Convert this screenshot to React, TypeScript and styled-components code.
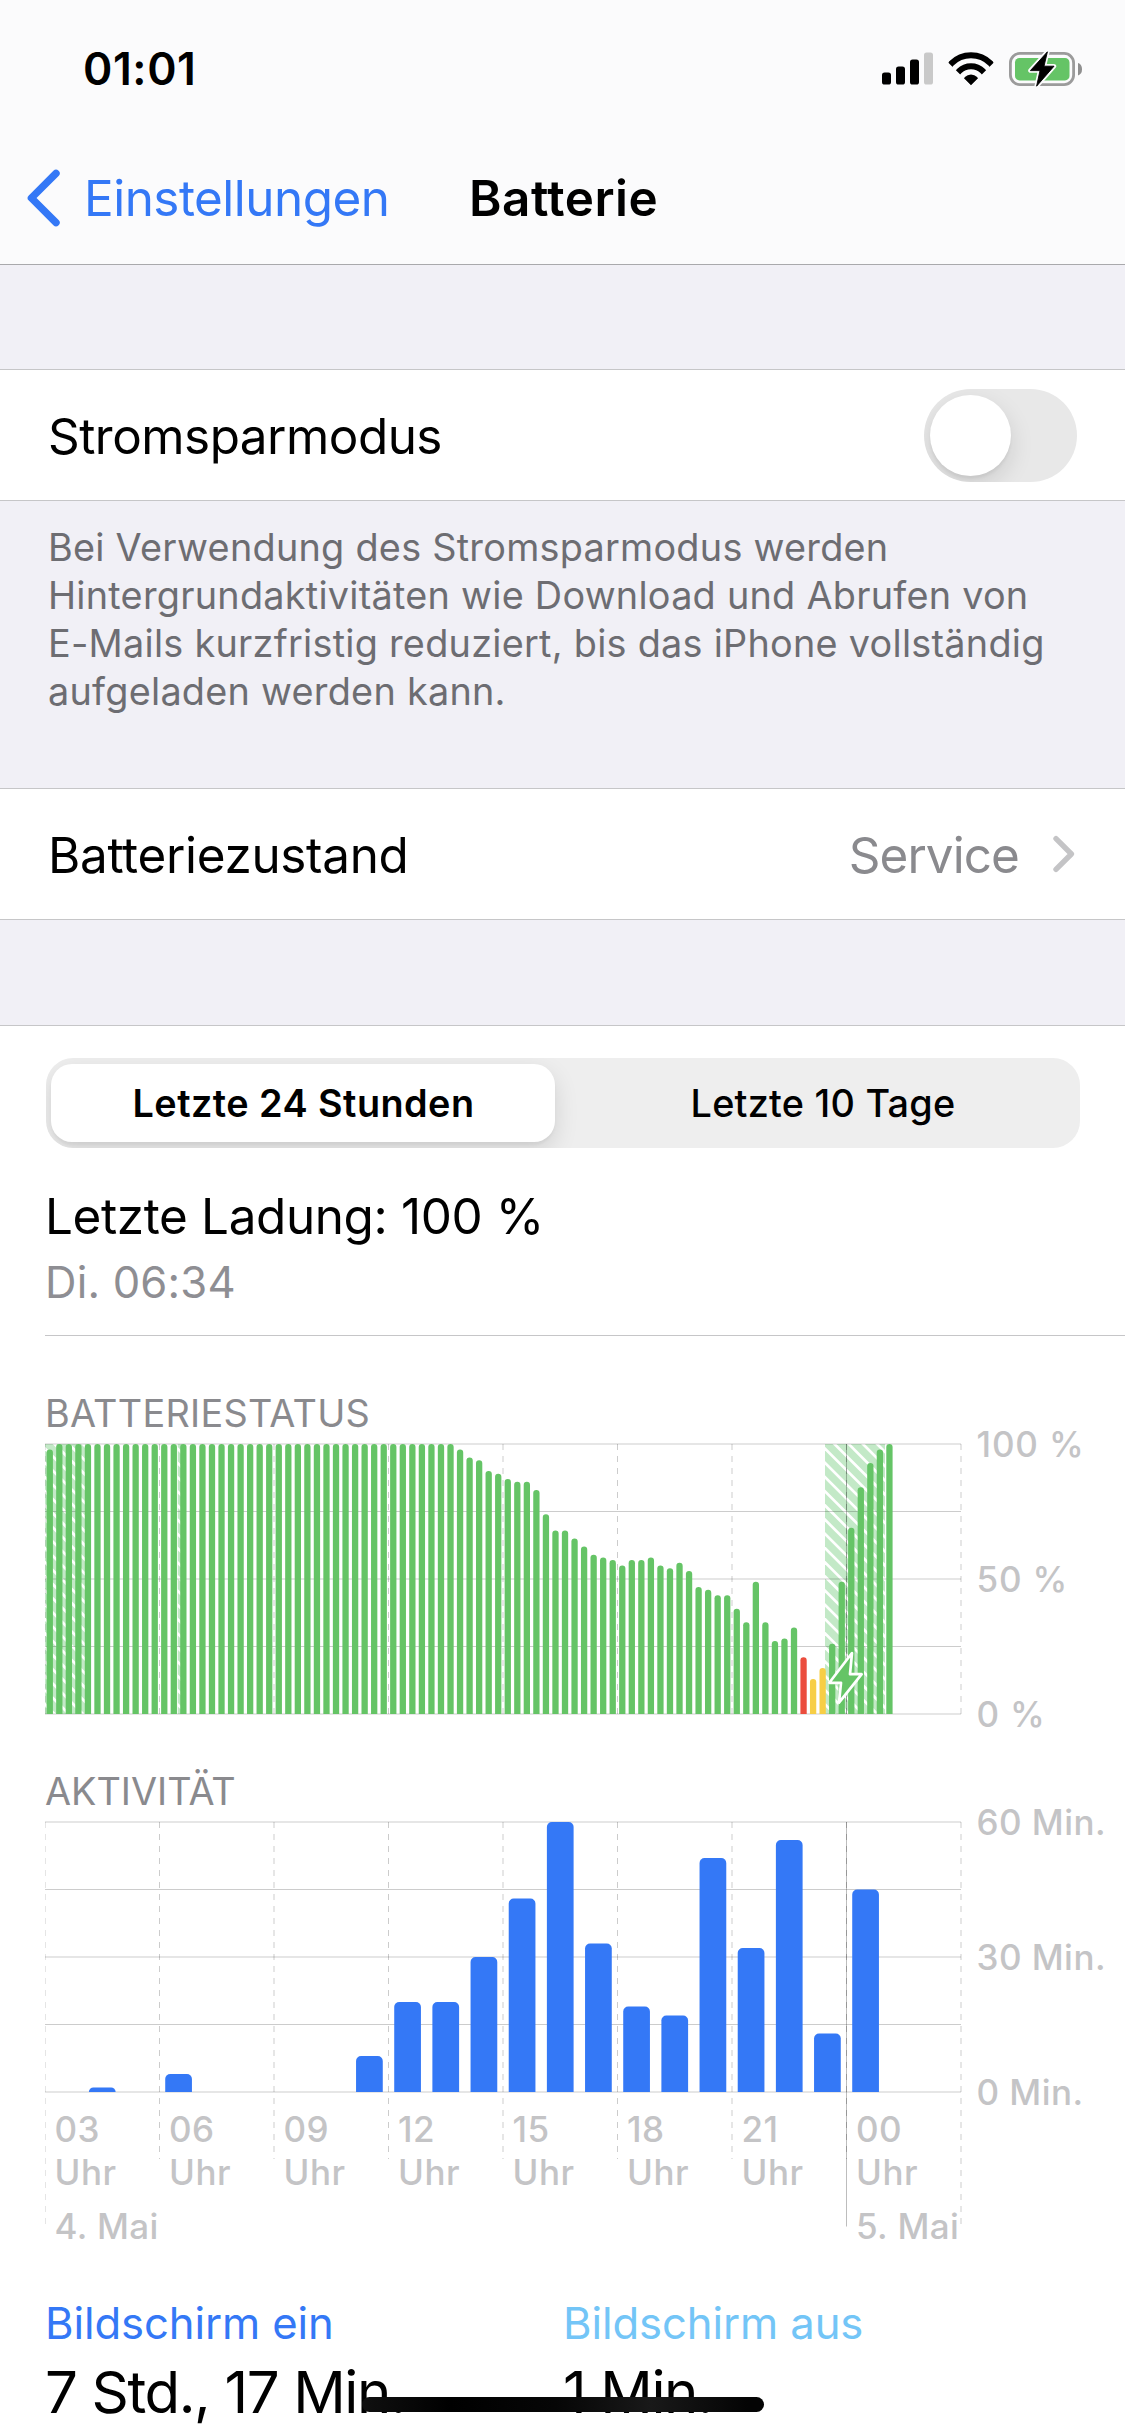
import React from 'react';
import styled, { createGlobalStyle } from 'styled-components';

const color = {
  blue: '#3478f6',
  sky: '#73c5f7',
  green: '#65c466',
  paleGreen: '#c3e9c7',
  red: '#eb4d3d',
  yellow: '#f7ce46',
  label: '#000000',
  secondary: '#8a8a8e',
  axis: '#c4c4c6',
  separator: '#c6c6c8',
  grouped: '#f1f0f6',
};

const GlobalStyle = createGlobalStyle`
  * { box-sizing: border-box; }
  body {
    margin: 0;
    background: #ffffff;
    font-family: Inter, 'Liberation Sans', sans-serif;
    color: ${color.label};
  }
`;

const Screen = styled.main`
  position: relative;
  width: 1125px;
  height: 2436px;
  overflow: hidden;
  background: ${color.grouped};
`;

const Header = styled.header`
  background: #fbfbfc;
  border-bottom: 1px solid #a9a9ac;
`;

const StatusBar = styled.div`
  display: flex;
  align-items: center;
  justify-content: space-between;
  height: 132px;
  padding: 6px 42px 0 83px;
`;

const Clock = styled.time`
  font-size: 44.5px;
  font-weight: 600;
  letter-spacing: 0.6px;
`;

const StatusIcons = styled.div`
  display: flex;
  align-items: center;
`;

const NavBar = styled.nav`
  display: grid;
  grid-template-columns: 469px 1fr;
  align-items: center;
  height: 132px;
`;

const BackButton = styled.a`
  display: flex;
  align-items: center;
  gap: 20px;
  padding-left: 26px;
  color: ${color.blue};
  font-size: 49.4px;
  letter-spacing: -0.5px;
`;

const NavTitle = styled.h1`
  margin: 0;
  font-size: 49.4px;
  font-weight: 600;
  letter-spacing: 0.5px;
`;

const Row = styled.div`
  display: flex;
  align-items: center;
  height: 132px;
  padding: 0 48px;
  background: #ffffff;
  border-top: 1px solid ${color.separator};
  border-bottom: 1px solid ${color.separator};
`;

const RowLabel = styled.span<{ $tracking: number }>`
  flex: 1;
  padding-top: 2px;
  font-size: 49.4px;
  letter-spacing: ${(p) => p.$tracking}px;
`;

const RowValue = styled.span`
  padding-top: 2px;
  margin-right: 33px;
  color: ${color.secondary};
  font-size: 49.4px;
  letter-spacing: -0.9px;
`;

const Gap = styled.div<{ $height: number }>`
  height: ${(p) => p.$height}px;
`;

const Footnote = styled.p`
  margin: 0;
  padding: 22px 60px 73px 48px;
  color: #6d6d72;
  font-size: 37.8px;
  line-height: 48px;
  letter-spacing: 0.26px;
`;

const Toggle = styled.span`
  display: flex;
  align-items: center;
  width: 153px;
  height: 93px;
  padding-left: 6px;
  border-radius: 47px;
  background: #e8e8e8;
  overflow: hidden;
`;

const Knob = styled.span`
  width: 81px;
  height: 81px;
  border-radius: 50%;
  background: #ffffff;
  box-shadow: 0 9px 24px rgba(0, 0, 0, 0.12), 0 3px 3px rgba(0, 0, 0, 0.05);
`;

const Usage = styled.section`
  height: 1411px;
  padding: 32px 0 0 45px;
  background: #ffffff;
  border-top: 1px solid ${color.separator};
`;

const Segmented = styled.div`
  display: grid;
  grid-template-columns: 504px 1fr;
  width: 1034px;
  height: 90px;
  margin-left: 1px;
  padding: 6px 5px;
  border-radius: 27px;
  background: #eeeeee;
  overflow: hidden;
`;

const Segment = styled.button<{ $selected?: boolean }>`
  display: flex;
  align-items: center;
  justify-content: center;
  padding: 0 0 0 ${(p) => (p.$selected ? 1 : 16)}px;
  border: 0;
  border-radius: 21px;
  background: ${(p) => (p.$selected ? '#ffffff' : 'transparent')};
  box-shadow: ${(p) => (p.$selected ? '0 9px 24px rgba(0,0,0,0.12), 0 3px 3px rgba(0,0,0,0.04)' : 'none')};
  color: inherit;
  font-family: inherit;
  font-size: 37.8px;
  font-weight: ${(p) => (p.$selected ? 600 : 500)};
  letter-spacing: ${(p) => (p.$selected ? 0.46 : 0.24)}px;
`;

const ChargeTitle = styled.div`
  margin: 38px 0 10px;
  font-size: 49.4px;
  line-height: 60px;
  letter-spacing: -0.35px;
`;

const ChargeTime = styled.div`
  font-size: 43.6px;
  line-height: 54px;
  letter-spacing: 0.2px;
  color: #8e8e93;
`;

const Divider = styled.hr`
  height: 1px;
  margin: 25px 0 0;
  border: 0;
  background: ${color.separator};
`;

const ChartTitle = styled.h2<{ $top: number; $tracking: number }>`
  margin: ${(p) => p.$top}px 0 7px;
  color: ${color.secondary};
  font-size: 37.8px;
  font-weight: 400;
  line-height: 46px;
  letter-spacing: ${(p) => p.$tracking}px;
`;

const ChartRow = styled.div`
  display: grid;
  grid-template-columns: 917px 1fr;
  height: 272px;
`;

const Plot = styled.svg`
  display: block;
  overflow: visible;
`;

const Scale = styled.div<{ $tracking: number }>`
  display: flex;
  flex-direction: column;
  justify-content: space-between;
  margin: -20px 0;
  padding-left: 14.5px;
  color: ${color.axis};
  font-size: 35px;
  font-weight: 500;
  line-height: 42px;
  letter-spacing: ${(p) => p.$tracking}px;
`;

const HourAxis = styled.div`
  display: grid;
  grid-template-columns: repeat(8, 114.5px);
  padding-top: 15px;
`;

const HourLabel = styled.div`
  padding-left: 9.5px;
  color: ${color.axis};
  font-size: 35px;
  font-weight: 500;
  line-height: 43px;
  letter-spacing: 0.5px;
`;

const DateAxis = styled(HourAxis)`
  padding-top: 11px;
`;

const DateLabel = styled(HourLabel)<{ $column: number }>`
  grid-column: ${(p) => p.$column};
  line-height: 42px;
  letter-spacing: 0.35px;
  white-space: nowrap;
`;

const Legend = styled.dl`
  display: grid;
  grid-template-columns: 518px 1fr;
  margin: 50px 0 0;
`;

const LegendName = styled.dt<{ $color: string }>`
  color: ${(p) => p.$color};
  font-size: 43.6px;
  line-height: 54px;
  letter-spacing: -0.08px;
`;

const LegendValue = styled.dd`
  margin: 5px 0 0;
  font-size: 58.2px;
  line-height: 72px;
  letter-spacing: -1.4px;
`;

const HomeIndicator = styled.div`
  position: absolute;
  left: 362px;
  top: 2397px;
  width: 402px;
  height: 15px;
  border-radius: 8px;
  background: linear-gradient(90deg, #101010, #000000 22%, #060606 48%, #191919 72%, #040404 96%);
`;

const SLOT = 916 / 96;
const HOUR = 916 / 24;
const BASE = 271;

const levels: number[] = [
  98, ...Array(42).fill(100),
  98, 95, 94, 90, 89, 87, 86, 86, 83, 74, 68, 68, 65, 62, 59, 58, 57, 55, 57, 57, 58, 55, 54, 56, 53,
  47, 46, 44, 44, 39, 34, 49, 34, 27, 28, 32, 21, 13, 17, 26, 49, 69, 84, 93, 98, 100,
];

const levelColor = (slot: number) =>
  slot === 79 ? color.red : slot === 80 || slot === 81 ? color.yellow : color.green;

const minutes = [0, 1, 0, 4, 0, 0, 0, 0, 8, 20, 20, 30, 43, 60, 33, 19, 17, 52, 32, 56, 13, 45];

const hours = ['03', '06', '09', '12', '15', '18', '21', '00'];

const barPath = (x: number, w: number, h: number, r: number) => {
  const k = Math.min(r, h);
  const top = BASE - h;
  return `M${x} ${BASE}V${top + k}a${k} ${k} 0 0 1 ${k} ${-k}H${x + w - k}a${k} ${k} 0 0 1 ${k} ${k}V${BASE}Z`;
};

function Grid({ inner, outer, midnight }: { inner: number; outer: number; midnight: number }) {
  return (
    <g fill="none" stroke="#000" strokeOpacity="0.2">
      {[0, 1, 2, 3, 4].map((n) => (
        <line key={n} x1="0" x2="916" y1={1 + n * 67.5} y2={1 + n * 67.5} />
      ))}
      {Array.from({ length: 9 }, (_, n) => {
        const edge = n === 0 || n === 8;
        const x = n === 0 ? 0.5 : n * 114.5;
        return (
          <line
            key={n}
            x1={x}
            x2={x}
            y1="1"
            y2={edge ? outer : inner}
            strokeDasharray="6 6"
            strokeOpacity={n === 0 ? 0.1 : 0.2}
          />
        );
      })}
      <line x1="801.5" x2="801.5" y1="1" y2={midnight} strokeOpacity="0.26" />
    </g>
  );
}

function Hatch({ id, x, width }: { id: string; x: number; width: number }) {
  const count = Math.ceil((270 + width) / 14.2) + 1;
  return (
    <g>
      <clipPath id={id}>
        <rect x={x} y="1" width={width} height="270" />
      </clipPath>
      <g clipPath={`url(#${id})`}>
        <rect x={x} y="1" width={width} height="270" fill={color.paleGreen} />
        {Array.from({ length: count }, (_, n) => {
          const y = 5.7 - Math.ceil(width / 14.2) * 14.2 + n * 14.2;
          return (
            <line key={n} x1={x - 5} y1={y - 5} x2={x + width + 5} y2={y + width + 5} stroke="#fff" strokeWidth="2.7" />
          );
        })}
      </g>
    </g>
  );
}

function BatteryPlot() {
  return (
    <Plot width="917" height="272">
      <Hatch id="night" x={0} width={41} />
      <Hatch id="morning" x={132.5} width={6} />
      <Hatch id="evening" x={780} width={60} />
      <Grid inner={271} outer={271} midnight={271} />
      {levels.map((value, slot) => (
        <path
          key={slot}
          d={barPath(slot * SLOT + (SLOT - 6.3) / 2, 6.3, value * 2.7, 3.1)}
          fill={levelColor(slot)}
        />
      ))}
      <path
        d="M807 210L784.3 239.8H796L794 259.7L816.7 231.2H805Z"
        fill={color.green}
        stroke="#fff"
        strokeWidth="2.7"
        strokeLinejoin="round"
      />
    </Plot>
  );
}

function ActivityPlot() {
  return (
    <Plot width="917" height="272">
      <Grid inner={338} outer={403} midnight={405.5} />
      {minutes.map((value, hour) =>
        value > 0 ? (
          <path key={hour} d={barPath(hour * HOUR + 5.72, 26.72, value * 4.5, 5)} fill={color.blue} />
        ) : null,
      )}
    </Plot>
  );
}

function SignalIcon() {
  return (
    <svg width="52" height="34" viewBox="0 0 52 34">
      <rect x="0" y="20.5" width="9" height="12" rx="2.6" />
      <rect x="14" y="14.5" width="9" height="18" rx="2.6" />
      <rect x="28" y="7.5" width="9" height="25" rx="2.6" />
      <rect x="42" y="0.5" width="9" height="32" rx="2.6" fill="#c9c9c9" />
    </svg>
  );
}

const WifiDrawing = styled.svg`
  margin-left: 14px;
`;

function WifiIcon() {
  return (
    <WifiDrawing width="46" height="34" viewBox="0 0 46 34">
      <clipPath id="fan">
        <path d="M23 33.3L0.9 11.2Q0 10.3 0.9 9.4L10-8H36L45.1 9.4Q46 10.3 45.1 11.2Z" />
      </clipPath>
      <g clipPath="url(#fan)" fill="none" stroke="#000">
        <circle cx="23" cy="31" r="27.7" strokeWidth="6" />
        <circle cx="23" cy="31" r="16.8" strokeWidth="6" />
        <circle cx="23" cy="31" r="8.6" fill="#000" stroke="none" />
      </g>
    </WifiDrawing>
  );
}

const BatteryDrawing = styled.svg`
  margin-left: 15px;
`;

function BatteryIcon() {
  const bolt = 'M38.4 0.8L21.4 19.6H31L27.6 35.2L45 15.2H35Z';
  return (
    <BatteryDrawing width="74" height="36" viewBox="0 0 74 36">
      <rect x="1.4" y="2.4" width="63.2" height="31.2" rx="9.5" fill="none" stroke="#9b9b9b" strokeWidth="2.8" />
      <path d="M69 12q4 1.2 4 6.2t-4 6.2z" fill="#8f8f8f" />
      <rect x="6" y="7" width="54.5" height="22.4" rx="4.5" fill={color.green} />
      <path d={bolt} fill="#fbfbfc" stroke="#fbfbfc" strokeWidth="4.4" strokeLinejoin="round" />
      <path d={bolt} stroke="#000" strokeWidth="0.9" strokeLinejoin="round" />
    </BatteryDrawing>
  );
}

export default function App() {
  return (
    <Screen>
      <GlobalStyle />
      <Header>
        <StatusBar>
          <Clock>01:01</Clock>
          <StatusIcons>
            <SignalIcon />
            <WifiIcon />
            <BatteryIcon />
          </StatusIcons>
        </StatusBar>
        <NavBar>
          <BackButton>
            <svg width="38" height="60" viewBox="0 0 38 60" fill="none" stroke={color.blue} strokeWidth="7.4" strokeLinecap="round" strokeLinejoin="round">
              <path d="M30 5.4L5.4 30L30 54.6" />
            </svg>
            Einstellungen
          </BackButton>
          <NavTitle>Batterie</NavTitle>
        </NavBar>
      </Header>

      <Gap $height={104} />
      <Row>
        <RowLabel $tracking={-0.49}>Stromsparmodus</RowLabel>
        <Toggle role="switch" aria-checked="false">
          <Knob />
        </Toggle>
      </Row>
      <Footnote>
        Bei Verwendung des Stromsparmodus werden
        <br />
        Hintergrundaktivitäten wie Download und Abrufen von
        <br />
        E-Mails kurzfristig reduziert, bis das iPhone vollständig
        <br />
        aufgeladen werden kann.
      </Footnote>
      <Row>
        <RowLabel $tracking={-0.3}>Batteriezustand</RowLabel>
        <RowValue>Service</RowValue>
        <svg width="25" height="40" viewBox="0 0 25 40" fill="none" stroke="#c4c4c6" strokeWidth="5.4" strokeLinecap="round" strokeLinejoin="round">
          <path d="M4 4.6L19.4 20L4 35.4" />
        </svg>
      </Row>
      <Gap $height={105} />

      <Usage>
        <Segmented>
          <Segment $selected>Letzte 24 Stunden</Segment>
          <Segment>Letzte 10 Tage</Segment>
        </Segmented>
        <ChargeTitle>Letzte Ladung: 100 %</ChargeTitle>
        <ChargeTime>Di. 06:34</ChargeTime>
        <Divider />

        <ChartTitle $top={54} $tracking={0.26}>BATTERIESTATUS</ChartTitle>
        <ChartRow>
          <BatteryPlot />
          <Scale $tracking={0.85}>
            <span>100 %</span>
            <span>50 %</span>
            <span>0 %</span>
          </Scale>
        </ChartRow>

        <ChartTitle $top={53} $tracking={0}>AKTIVITÄT</ChartTitle>
        <ChartRow>
          <ActivityPlot />
          <Scale $tracking={0.45}>
            <span>60 Min.</span>
            <span>30 Min.</span>
            <span>0 Min.</span>
          </Scale>
        </ChartRow>
        <HourAxis>
          {hours.map((hour) => (
            <HourLabel key={hour}>
              {hour}
              <br />
              Uhr
            </HourLabel>
          ))}
        </HourAxis>
        <DateAxis>
          <DateLabel $column={1}>4. Mai</DateLabel>
          <DateLabel $column={8}>5. Mai</DateLabel>
        </DateAxis>

        <Legend>
          <div>
            <LegendName $color={color.blue}>Bildschirm ein</LegendName>
            <LegendValue>7 Std., 17 Min.</LegendValue>
          </div>
          <div>
            <LegendName $color={color.sky}>Bildschirm aus</LegendName>
            <LegendValue>1 Min.</LegendValue>
          </div>
        </Legend>
      </Usage>
      <HomeIndicator />
    </Screen>
  );
}
